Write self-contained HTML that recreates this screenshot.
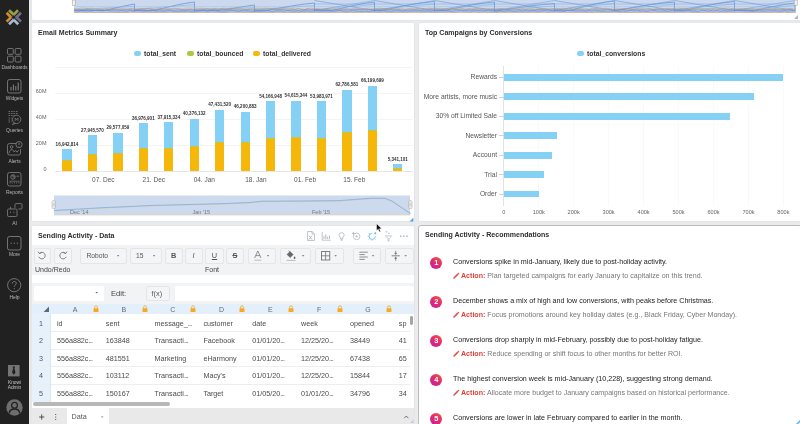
<!DOCTYPE html>
<html><head><meta charset="utf-8"><title>Dashboard</title>
<style>
*{box-sizing:border-box;margin:0;padding:0}
html,body{width:800px;height:424px;overflow:hidden;background:#e9ebec;font-family:"Liberation Sans",sans-serif;}
body{position:relative}
.abs{position:absolute}
.side{position:absolute;left:0;top:0;width:29px;height:424px;background:#212121}
.side .lb{position:absolute;left:0;width:29px;text-align:center;font-size:5px;color:#b4b4b4;line-height:6px;letter-spacing:-0.1px}
.side svg{position:absolute;overflow:visible}
.panel{position:absolute;background:#fff;border:1px solid #e3e6e8;border-radius:2px}
.title{position:absolute;font-weight:bold;font-size:7.05px;color:#2e2e2e;white-space:nowrap;line-height:10px}
.t{position:absolute;white-space:nowrap}
.leg{position:absolute;font-weight:bold;font-size:6.8px;color:#333;white-space:nowrap;line-height:9px}
.pill{position:absolute;width:7px;height:4.4px;border-radius:2.2px}
.ylab{position:absolute;font-size:5.5px;color:#666;white-space:nowrap;line-height:8px;text-align:right}
.xlab{position:absolute;font-size:6.5px;color:#555;white-space:nowrap;line-height:9px;text-align:center;width:40px}
.dl{position:absolute;font-size:4.55px;font-weight:bold;color:#333;white-space:nowrap;line-height:6px;text-align:center;width:40px}
.grid{position:absolute;height:1px;background:#f4f4f4}
.bar{position:absolute}
.cat{position:absolute;font-size:6.7px;color:#555;white-space:nowrap;line-height:9px;text-align:right;width:90px}
.xl2{position:absolute;font-size:5.6px;color:#666;white-space:nowrap;line-height:7px;text-align:center;width:30px}
.rec1{position:absolute;font-size:7.15px;color:#222;white-space:nowrap;line-height:10px}
.rec2{position:absolute;font-size:7.08px;color:#777;white-space:nowrap;line-height:10px}
.rec2 b{color:#e0403a}
.num{position:absolute;width:12px;height:12px;border-radius:50%;background:linear-gradient(215deg,#f4563a 5%,#e02a70 50%,#c81fa6 100%);color:#fff;font-weight:bold;font-size:7.4px;line-height:12px;text-align:center}
.tb{position:absolute;background:#f1f3f4}
.btn{position:absolute;background:#f4f5f6;border:1px solid #e3e5e7;border-radius:2px}
.btxt{position:absolute;font-size:7.4px;color:#555;white-space:nowrap;line-height:9px}
.cell{position:absolute;font-size:7.2px;color:#4a4a4a;white-space:nowrap;line-height:9px}
.hl{position:absolute;height:1px;background:#eeeeee}
.dd{letter-spacing:-0.7px}
</style></head><body><div id="root" style="position:absolute;left:0;top:0;width:800px;height:424px;will-change:transform">

<div class="side">
<svg style="left:0px;top:0px" width="29" height="30" viewBox="0 0 29 30" fill="none" stroke-width="2.7" stroke-linejoin="miter">
<path d="M9 10.2 L13.7 14.6 L18 10.2" stroke="#9aa03e"/>
<path d="M6.6 12.8 L11 17.2 L6.6 21.6" stroke="#d48a2e"/>
<path d="M21 12.8 L16.5 17.2 L21 21.6" stroke="#756a86"/>
<path d="M9 24.2 L13.7 19.8 L18.2 24.2" stroke="#a4bcd2"/>
<circle cx="13.7" cy="17.2" r="1.9" fill="#1d1d1d" stroke="#5f6a74" stroke-width="0.8"/>
</svg>
<svg style="left:7px;top:48px" width="15" height="15" viewBox="0 0 15 15" fill="none" stroke="#7d7d7d" stroke-width="0.9">
<rect x="0.5" y="0.5" width="5.8" height="5.8" rx="1"/><rect x="8.2" y="0.5" width="5.8" height="5.8" rx="1"/>
<rect x="0.5" y="8.2" width="5.8" height="5.8" rx="1"/><rect x="8.2" y="8.2" width="5.8" height="5.8" rx="1"/></svg>
<div class="lb" style="top:64.4px">Dashboards</div>
<svg style="left:7px;top:79px" width="15" height="15" viewBox="0 0 15 15" fill="none" stroke="#7d7d7d" stroke-width="0.9">
<rect x="0.5" y="0.5" width="13.5" height="13.5" rx="2"/>
<path d="M4 11.5V8 M6.4 11.5V5.5 M8.8 11.5V7 M11.2 11.5V3.5" stroke-width="1.1"/></svg>
<div class="lb" style="top:95.4px">Widgets</div>
<svg style="left:7px;top:110px" width="16" height="16" viewBox="0 0 16 16" fill="none" stroke="#7d7d7d" stroke-width="0.8">
<path d="M1.5 1.5h10 M1.5 3.5h10 M1.5 5.5h6" stroke-dasharray="1.6 0.9"/>
<path d="M1.5 8h3 M1.5 10h3 M1.5 12h3" stroke-dasharray="1.6 0.9"/>
<circle cx="9.6" cy="9.4" r="4.2"/><path d="M7 12.6 L5.6 14.6 L8.6 13.4"/>
<path d="M8.2 11V8l1.4 1.8L11 8v3" stroke-width="0.7"/></svg>
<div class="lb" style="top:126.9px">Queries</div>
<svg style="left:7px;top:141px" width="16" height="15" viewBox="0 0 16 15" fill="none" stroke="#7d7d7d" stroke-width="0.85">
<path d="M9 2.5H2.5a2 2 0 0 0-2 2V12a2 2 0 0 0 2 2h9a2 2 0 0 0 2-2V8"/>
<circle cx="12" cy="3.6" r="3.1"/><path d="M12 1.8v2.2 M12 5v0.5" stroke-width="0.9"/>
<circle cx="4.6" cy="6" r="1.3"/><path d="M2 12.2c0.5-3 1.8-3.6 2.8-3.6s1.6 0.8 2.4 2.4l1.4-1.6 1.4 1.8 1.6-2"/></svg>
<div class="lb" style="top:157.9px">Alerts</div>
<svg style="left:7px;top:172px" width="15" height="15" viewBox="0 0 15 15" fill="none" stroke="#7d7d7d" stroke-width="0.85">
<rect x="0.5" y="0.5" width="13.5" height="13.5" rx="2"/>
<circle cx="6" cy="5" r="2.2"/><path d="M6 2.8V5h2.2 M9.5 4.2h2.5"/>
<path d="M3 11.5V9.2h9v2.3 M5.2 11.5v-1.4 M7.4 11.5v-1.4 M9.6 11.5v-1.4" stroke-width="0.7"/></svg>
<div class="lb" style="top:188.9px">Reports</div>
<svg style="left:6px;top:203px" width="17" height="15" viewBox="0 0 17 15" fill="none" stroke="#7d7d7d" stroke-width="0.85">
<rect x="1.5" y="6" width="9.5" height="7.5" rx="1.2"/><path d="M4.5 6V3.8 M4.5 2.6v0.1"/>
<path d="M4 9.2h1 M7.4 9.2h1" stroke-width="1"/>
<path d="M9 4.8V1.6a1 1 0 0 1 1-1h5a1 1 0 0 1 1 1V5a1 1 0 0 1-1 1h-2.6"/></svg>
<div class="lb" style="top:220.4px">AI</div>
<svg style="left:7px;top:236px" width="15" height="15" viewBox="0 0 15 15" fill="none" stroke="#7d7d7d" stroke-width="0.9">
<rect x="0.5" y="0.5" width="13.5" height="13.5" rx="2"/>
<path d="M3.6 7.3h1.2 M6.7 7.3h1.2 M9.8 7.3h1.2" stroke-width="1.1"/></svg>
<div class="lb" style="top:251.4px">More</div>
<svg style="left:7px;top:278px" width="15" height="15" viewBox="0 0 15 15" fill="none" stroke="#7d7d7d" stroke-width="0.9">
<circle cx="7.2" cy="7.2" r="6.6"/>
<path d="M5.2 5.6c0-1.4 1-2.1 2.1-2.1s2 0.8 2 1.9c0 1.5-2 1.6-2 3.2 M7.3 10.2v1" stroke-width="1"/></svg>
<div class="lb" style="top:294.4px">Help</div>
<svg style="left:8px;top:364.8px" width="11.6" height="11.4" viewBox="0 0 11.6 11.4">
<rect x="0" y="0" width="11.6" height="11.4" fill="#747474"/>
<path d="M4.5 1.6h2.6l-0.7 1.7 1.1 4.3L5.8 9.8 4.1 7.6l1.1-4.3z" fill="#1e1e1e"/></svg>
<div class="lb" style="top:379.6px;line-height:5.2px;font-size:4.9px;color:#c4c4c4">Knowi<br>Admin</div>
<svg style="left:5.6px;top:398.6px" width="17" height="17" viewBox="0 0 17 17">
<circle cx="8.5" cy="8.5" r="8.2" fill="#6e6e6e"/>
<path d="M3.2 14.4c0.3-3.2 2.3-4.4 5.3-4.4s5 1.2 5.3 4.4" fill="#6e6e6e" stroke="#222" stroke-width="1.3"/>
<circle cx="8.5" cy="6.3" r="2.9" fill="#6e6e6e" stroke="#222" stroke-width="1.3"/>
</svg>
</div>
<div class="abs" style="left:29px;top:0;width:1.5px;height:424px;background:#e6e8ea"></div>
<div class="panel" style="left:30.5px;top:-2px;width:771px;height:22.5px;border-radius:0 0 2px 2px"></div>
<svg class="abs" style="left:0;top:0" width="800" height="22" viewBox="0 0 800 22">
<rect x="74" y="0" width="722" height="12.6" fill="#cbd8ed"/>
<path d="M74.5 10.5 H104.5 Q125.5 5.5 134.5 4 V11.5" fill="none" stroke="#4f8ad6" stroke-width="0.65"/>
<path d="M74.5 9.6 L134.5 6.5" fill="none" stroke="#78a8e2" stroke-width="0.45"/>
<path d="M74.5 6.5 H134.5" fill="none" stroke="#8fb5e6" stroke-width="0.4" opacity="0.7"/>
<path d="M134.5 10.5 H154.5 Q180.5 3.5 194.5 2 V11.5" fill="none" stroke="#4f8ad6" stroke-width="0.65"/>
<path d="M134.5 9.6 L194.5 4.5" fill="none" stroke="#78a8e2" stroke-width="0.45"/>
<path d="M134.5 6.5 H194.5" fill="none" stroke="#8fb5e6" stroke-width="0.4" opacity="0.7"/>
<path d="M194.5 10.5 H219.5 Q243.0 6.5 254.5 5 V11.5" fill="none" stroke="#4f8ad6" stroke-width="0.65"/>
<path d="M194.5 9.6 L254.5 7.5" fill="none" stroke="#78a8e2" stroke-width="0.45"/>
<path d="M194.5 6.5 H254.5" fill="none" stroke="#8fb5e6" stroke-width="0.4" opacity="0.7"/>
<path d="M254.5 10.5 H266.5 Q296.5 4.5 314.5 3 V11.5" fill="none" stroke="#4f8ad6" stroke-width="0.65"/>
<path d="M254.5 9.6 L314.5 5.5" fill="none" stroke="#78a8e2" stroke-width="0.45"/>
<path d="M254.5 6.5 H314.5" fill="none" stroke="#8fb5e6" stroke-width="0.4" opacity="0.7"/>
<path d="M314.5 10.5 H332.5 Q359.5 3.5 374.5 2 V11.5" fill="none" stroke="#4f8ad6" stroke-width="0.65"/>
<path d="M314.5 9.6 L374.5 4.5" fill="none" stroke="#78a8e2" stroke-width="0.45"/>
<path d="M314.5 6.5 H374.5" fill="none" stroke="#8fb5e6" stroke-width="0.4" opacity="0.7"/>
<path d="M314.5 0.5 L374.5 10.5" fill="none" stroke="#5d93da" stroke-width="0.55"/>
<path d="M314.5 10.5 L374.5 0.5" fill="none" stroke="#6a9de0" stroke-width="0.5"/>
<path d="M314.5 4 H374.5" fill="none" stroke="#6a9de0" stroke-width="0.4"/>
<path d="M374.5 10.5 H382.5 Q414.5 3.0 434.5 1.5 V11.5" fill="none" stroke="#4f8ad6" stroke-width="0.65"/>
<path d="M374.5 9.6 L434.5 4.0" fill="none" stroke="#78a8e2" stroke-width="0.45"/>
<path d="M374.5 6.5 H434.5" fill="none" stroke="#8fb5e6" stroke-width="0.4" opacity="0.7"/>
<path d="M374.5 0.5 L434.5 10.5" fill="none" stroke="#5d93da" stroke-width="0.55"/>
<path d="M374.5 10.5 L434.5 0.5" fill="none" stroke="#6a9de0" stroke-width="0.5"/>
<path d="M374.5 4 H434.5" fill="none" stroke="#6a9de0" stroke-width="0.4"/>
<path d="M434.5 10.5 H444.5 Q475.5 3.5 494.5 2 V11.5" fill="none" stroke="#4f8ad6" stroke-width="0.65"/>
<path d="M434.5 9.6 L494.5 4.5" fill="none" stroke="#78a8e2" stroke-width="0.45"/>
<path d="M434.5 6.5 H494.5" fill="none" stroke="#8fb5e6" stroke-width="0.4" opacity="0.7"/>
<path d="M434.5 0.5 L494.5 10.5" fill="none" stroke="#5d93da" stroke-width="0.55"/>
<path d="M434.5 10.5 L494.5 0.5" fill="none" stroke="#6a9de0" stroke-width="0.5"/>
<path d="M434.5 4 H494.5" fill="none" stroke="#6a9de0" stroke-width="0.4"/>
<path d="M494.5 10.5 H499.5 Q533.0 5.0 554.5 3.5 V11.5" fill="none" stroke="#4f8ad6" stroke-width="0.65"/>
<path d="M494.5 9.6 L554.5 6.0" fill="none" stroke="#78a8e2" stroke-width="0.45"/>
<path d="M494.5 6.5 H554.5" fill="none" stroke="#8fb5e6" stroke-width="0.4" opacity="0.7"/>
<path d="M494.5 0.5 L554.5 10.5" fill="none" stroke="#5d93da" stroke-width="0.55"/>
<path d="M494.5 10.5 L554.5 0.5" fill="none" stroke="#6a9de0" stroke-width="0.5"/>
<path d="M494.5 4 H554.5" fill="none" stroke="#6a9de0" stroke-width="0.4"/>
<path d="M554.5 10.5 H569.5 Q598.0 2.5 614.5 1 V11.5" fill="none" stroke="#4f8ad6" stroke-width="0.65"/>
<path d="M554.5 9.6 L614.5 3.5" fill="none" stroke="#78a8e2" stroke-width="0.45"/>
<path d="M554.5 6.5 H614.5" fill="none" stroke="#8fb5e6" stroke-width="0.4" opacity="0.7"/>
<path d="M554.5 0.5 L614.5 10.5" fill="none" stroke="#5d93da" stroke-width="0.55"/>
<path d="M554.5 10.5 L614.5 0.5" fill="none" stroke="#6a9de0" stroke-width="0.5"/>
<path d="M554.5 4 H614.5" fill="none" stroke="#6a9de0" stroke-width="0.4"/>
<path d="M614.5 10.5 H617.5 Q652.0 3.5 674.5 2 V11.5" fill="none" stroke="#4f8ad6" stroke-width="0.65"/>
<path d="M614.5 9.6 L674.5 4.5" fill="none" stroke="#78a8e2" stroke-width="0.45"/>
<path d="M614.5 6.5 H674.5" fill="none" stroke="#8fb5e6" stroke-width="0.4" opacity="0.7"/>
<path d="M614.5 0.5 L674.5 10.5" fill="none" stroke="#5d93da" stroke-width="0.55"/>
<path d="M614.5 10.5 L674.5 0.5" fill="none" stroke="#6a9de0" stroke-width="0.5"/>
<path d="M614.5 4 H674.5" fill="none" stroke="#6a9de0" stroke-width="0.4"/>
<path d="M674.5 10.5 H684.5 Q715.5 3.0 734.5 1.5 V11.5" fill="none" stroke="#4f8ad6" stroke-width="0.65"/>
<path d="M674.5 9.6 L734.5 4.0" fill="none" stroke="#78a8e2" stroke-width="0.45"/>
<path d="M674.5 6.5 H734.5" fill="none" stroke="#8fb5e6" stroke-width="0.4" opacity="0.7"/>
<path d="M674.5 0.5 L734.5 10.5" fill="none" stroke="#5d93da" stroke-width="0.55"/>
<path d="M674.5 10.5 L734.5 0.5" fill="none" stroke="#6a9de0" stroke-width="0.5"/>
<path d="M674.5 4 H734.5" fill="none" stroke="#6a9de0" stroke-width="0.4"/>
<path d="M734.5 10.5 H754.5 Q780.8 4.5 795 3 V11.5" fill="none" stroke="#4f8ad6" stroke-width="0.65"/>
<path d="M734.5 9.6 L795 5.5" fill="none" stroke="#78a8e2" stroke-width="0.45"/>
<path d="M734.5 6.5 H795" fill="none" stroke="#8fb5e6" stroke-width="0.4" opacity="0.7"/>
<path d="M734.5 0.5 L795 10.5" fill="none" stroke="#5d93da" stroke-width="0.55"/>
<path d="M734.5 10.5 L795 0.5" fill="none" stroke="#6a9de0" stroke-width="0.5"/>
<path d="M734.5 4 H795" fill="none" stroke="#6a9de0" stroke-width="0.4"/>
<path d="M74.0 8.35 L76.0 8.81 L77.7 8.65 L80.3 7.98 L83.3 7.95 L86.1 8.00 L87.9 8.49 L91.8 8.07 L94.0 8.78 L98.4 8.71 L101.0 9.27 L102.7 9.10 L105.1 8.10 L106.9 8.33 L110.9 8.15 L114.1 8.79 L116.7 8.67 L118.4 7.98 L120.5 8.85 L123.3 8.34 L126.6 8.53 L129.0 9.01 L132.6 8.24 L135.8 8.64 L139.9 8.92 L142.3 9.27 L144.1 8.49 L147.9 8.11 L150.9 7.95 L154.4 8.97 L157.6 9.13 L160.0 8.87 L163.3 8.71 L166.2 9.08 L170.5 8.56 L174.0 7.98 L177.6 8.81 L182.1 9.05 L184.4 8.44 L188.0 7.93 L190.8 8.14 L192.7 7.98 L196.5 8.08 L198.7 8.45 L202.8 8.01 L205.7 8.67 L209.8 9.05 L213.9 8.29 L216.7 8.40 L220.8 9.24 L222.8 8.15 L225.0 8.23 L227.9 8.72 L230.2 7.91 L233.0 8.42 L236.2 9.23 L239.8 8.62 L243.1 8.85 L244.8 9.16 L248.6 9.12 L252.5 8.45 L255.2 8.04 L258.6 7.99 L260.3 8.19 L262.3 8.38 L264.0 7.90 L265.9 8.04 L268.5 7.94 L272.6 8.76 L274.6 8.25 L277.1 8.41 L279.0 9.09 L283.5 8.55 L286.4 8.02 L288.2 8.38 L290.5 9.06 L292.5 7.93 L296.8 8.64 L298.8 8.66 L300.4 8.64 L304.8 9.11 L308.4 8.27 L311.0 8.13 L314.8 8.65 L318.6 8.36 L320.8 9.04 L325.3 9.09 L329.2 9.05 L332.9 8.22 L336.0 8.40 L337.5 7.94 L339.9 8.26 L343.5 9.24 L346.3 9.21 L350.8 9.24 L353.4 8.21 L355.5 8.18 L357.7 8.77 L361.9 9.08 L364.8 8.81 L368.7 8.02 L372.2 9.17 L376.0 8.95 L379.0 8.15 L382.8 8.37 L386.7 9.26 L389.4 8.46 L393.8 8.91 L395.8 8.08 L397.7 9.17 L401.6 8.10 L405.6 9.27 L409.1 8.39 L412.2 8.08 L413.8 9.26 L417.2 8.64 L421.5 8.51 L425.6 9.06 L427.8 8.25 L430.2 8.24 L433.4 8.26 L436.2 8.08 L440.4 8.40 L443.3 8.72 L447.5 8.49 L451.7 8.60 L454.8 8.63 L456.4 8.52 L458.4 7.91 L462.3 8.14 L465.3 8.92 L468.4 8.36 L471.5 8.68 L475.3 8.05 L478.5 8.25 L480.8 8.98 L483.9 8.69 L487.7 9.18 L490.5 8.76 L493.5 8.62 L497.1 8.53 L500.2 8.57 L504.5 8.88 L508.6 9.22 L510.9 8.68 L515.2 9.08 L517.1 8.07 L520.0 8.00 L522.2 8.00 L525.7 9.00 L529.9 8.12 L533.5 8.82 L535.5 9.14 L539.9 8.21 L544.2 8.46 L547.2 9.29 L551.2 8.13 L554.0 8.62 L556.5 8.17 L559.0 8.91 L560.5 8.68 L563.3 7.93 L565.8 8.77 L568.9 7.99 L573.3 9.00 L577.7 8.05 L580.0 7.96 L583.9 8.28 L585.8 8.49 L590.0 9.05 L592.3 8.11 L596.5 8.70 L600.1 8.03 L601.8 8.86 L604.6 8.00 L608.9 8.79 L612.8 8.02 L616.9 7.99 L621.0 8.54 L623.5 8.67 L627.8 8.28 L629.6 8.64 L631.9 8.05 L633.8 7.97 L635.9 8.34 L638.4 8.96 L640.7 8.60 L642.8 8.39 L644.3 8.25 L645.9 8.93 L649.0 8.17 L651.9 9.21 L653.8 9.05 L656.6 8.59 L660.6 8.45 L663.6 8.86 L668.0 8.38 L672.0 8.89 L675.4 8.47 L678.0 7.98 L679.9 8.00 L683.6 8.26 L685.6 8.02 L689.6 9.12 L693.1 8.29 L695.3 8.31 L698.2 8.12 L701.1 8.27 L705.4 9.26 L708.6 8.24 L713.0 8.33 L715.6 7.90 L718.2 8.56 L721.2 8.18 L724.2 7.91 L726.5 8.03 L729.2 7.96 L730.8 8.33 L733.0 8.72 L736.1 8.95 L739.5 8.90 L743.7 8.45 L746.2 9.28 L748.1 8.91 L751.5 7.96 L755.5 9.15 L758.9 8.93 L762.9 8.10 L765.9 8.61 L769.9 9.03 L773.9 8.72 L778.1 8.86 L781.7 8.22 L783.3 8.09 L785.8 8.05 L789.9 8.68 L793.2 8.78" fill="none" stroke="#d9a05c" stroke-width="0.5" opacity="0.8"/>
<path d="M74.0 9.04 L75.5 9.47 L79.3 9.05 L82.4 9.27 L84.1 9.38 L86.3 8.45 L88.6 9.37 L90.7 9.39 L95.2 9.04 L97.8 9.02 L101.4 9.42 L104.7 9.25 L106.4 8.56 L108.7 9.39 L111.1 9.14 L112.6 8.43 L115.0 9.29 L118.5 9.30 L120.9 9.07 L123.8 9.00 L125.7 9.60 L127.8 9.72 L132.1 8.37 L134.9 9.50 L139.3 8.98 L141.6 8.64 L146.0 8.64 L149.2 8.55 L152.3 9.68 L154.2 9.50 L157.2 9.59 L160.8 8.67 L165.0 9.03 L166.6 8.36 L169.6 8.98 L172.0 8.55 L174.5 8.79 L178.5 8.35 L182.3 9.52 L184.1 9.65 L187.8 9.61 L190.2 8.87 L192.8 9.75 L196.1 8.85 L198.9 8.74 L200.5 8.49 L204.5 8.75 L208.8 8.70 L211.1 9.07 L213.2 8.87 L217.6 9.59 L221.5 9.23 L225.8 9.67 L228.9 9.36 L230.6 9.38 L233.4 9.40 L236.8 8.75 L238.5 9.65 L240.4 9.01 L242.9 8.77 L246.6 9.72 L248.9 9.27 L251.3 9.13 L254.0 8.58 L256.0 8.64 L260.2 9.05 L262.3 9.62 L266.8 8.98 L268.8 8.62 L270.5 8.83 L272.3 8.68 L274.6 9.15 L278.7 9.40 L281.5 8.93 L284.5 8.88 L287.1 8.44 L289.4 9.70 L291.3 9.05 L294.7 9.56 L296.8 8.73 L299.1 8.91 L301.9 9.69 L305.9 9.57 L307.5 8.40 L311.1 9.60 L314.0 9.17 L315.5 8.90 L319.8 9.51 L323.9 9.71 L326.1 8.50 L328.1 9.08 L331.7 9.67 L335.3 9.26 L339.1 8.99 L342.3 8.41 L346.1 8.68 L350.4 9.25 L352.8 8.53 L355.0 9.24 L358.6 8.51 L360.3 9.08 L363.6 8.89 L365.8 9.19 L367.3 8.77 L370.2 9.69 L373.6 9.59 L376.5 8.68 L378.8 9.69 L382.4 8.78 L384.0 9.05 L387.5 8.94 L389.8 9.28 L394.0 8.67 L395.6 8.82 L398.4 9.31 L400.5 9.47 L404.2 9.06 L406.3 9.71 L408.8 9.50 L410.9 8.66 L414.7 8.76 L419.1 9.04 L421.1 8.66 L423.9 9.28 L428.2 8.55 L430.9 8.65 L435.3 8.55 L437.0 8.43 L439.7 9.61 L443.8 9.38 L448.3 9.65 L450.8 8.61 L455.1 9.39 L456.7 9.28 L459.4 8.87 L461.8 8.59 L463.4 8.74 L465.9 9.69 L467.8 9.70 L469.9 8.85 L473.9 9.50 L476.7 8.42 L479.6 8.87 L483.8 8.62 L486.4 9.61 L488.0 8.93 L492.0 9.42 L493.6 8.40 L495.3 9.64 L497.5 9.40 L501.7 8.82 L504.1 9.69 L507.4 8.72 L511.1 8.79 L513.4 8.36 L517.2 9.63 L520.6 9.67 L522.1 8.68 L525.1 9.69 L529.4 8.89 L531.7 8.95 L534.6 9.65 L536.7 9.47 L540.4 9.50 L544.2 9.20 L546.7 8.80 L549.3 9.45 L551.0 8.63 L554.8 8.70 L556.5 8.40 L559.6 8.81 L564.1 9.59 L568.6 8.72 L570.3 8.48 L573.3 9.34 L576.1 8.68 L578.9 9.22 L582.4 9.40 L586.5 9.28 L588.3 9.53 L590.7 9.14 L593.3 9.38 L595.4 8.70 L597.7 8.56 L601.8 9.16 L604.3 8.90 L608.8 9.06 L611.0 9.48 L614.4 9.74 L616.2 9.01 L620.2 9.53 L624.4 8.41 L626.8 8.52 L628.9 9.71 L632.1 9.65 L634.7 9.56 L637.6 8.71 L641.4 9.67 L643.2 9.18 L646.6 8.65 L649.2 8.55 L651.3 8.71 L654.6 9.26 L656.7 8.37 L659.2 9.30 L661.3 8.79 L663.4 9.46 L666.5 8.44 L668.3 8.90 L671.5 9.24 L673.2 8.58 L676.8 8.92 L679.2 8.78 L683.5 8.79 L686.7 8.85 L689.5 9.56 L694.0 8.86 L696.1 9.37 L698.2 8.36 L702.4 8.94 L706.3 8.92 L710.5 9.00 L712.5 8.37 L715.6 9.25 L719.9 8.47 L723.2 8.87 L726.2 8.55 L728.6 9.08 L732.9 8.50 L735.8 9.48 L740.2 8.63 L742.1 9.67 L746.5 9.03 L748.2 9.65 L750.9 9.62 L754.2 9.50 L756.2 9.45 L758.4 8.92 L762.4 9.51 L764.5 8.66 L767.2 9.08 L769.8 8.52 L772.1 9.36 L776.3 8.41 L779.4 9.41 L781.1 9.52 L782.9 9.19 L786.1 9.23 L788.5 8.94 L791.7 8.95 L795.2 8.98" fill="none" stroke="#c98a9a" stroke-width="0.5" opacity="0.8"/>
<path d="M74.0 8.83 L77.4 9.49 L79.6 9.87 L83.4 9.44 L85.4 9.46 L87.3 8.98 L90.1 8.93 L92.9 9.51 L94.5 9.69 L96.2 9.83 L100.1 9.52 L101.7 9.51 L104.4 10.13 L106.3 10.00 L110.8 9.82 L114.7 9.07 L119.2 9.49 L123.5 10.08 L125.5 9.90 L129.8 8.89 L132.4 9.86 L134.4 10.06 L136.7 9.94 L138.6 9.50 L142.9 9.09 L145.2 9.51 L147.6 8.85 L149.7 9.03 L154.0 9.75 L158.2 9.04 L162.0 8.96 L165.1 9.69 L167.7 10.02 L170.8 9.61 L175.0 8.95 L179.5 9.68 L182.2 9.92 L184.4 10.19 L187.7 9.30 L191.5 9.42 L193.5 9.84 L195.2 9.95 L197.4 9.69 L201.9 9.62 L205.4 9.24 L206.9 8.85 L208.8 9.66 L211.6 9.52 L215.8 8.98 L218.0 9.71 L219.5 8.80 L222.1 8.95 L224.7 9.11 L227.9 9.62 L230.0 9.67 L233.0 8.99 L237.3 9.14 L239.2 8.93 L242.6 10.02 L246.5 9.36 L248.8 8.82 L252.2 9.59 L254.8 9.70 L257.6 10.11 L261.3 9.15 L265.5 8.86 L268.6 9.37 L270.8 8.88 L274.6 8.82 L277.8 10.12 L279.7 9.08 L283.1 9.51 L286.5 9.94 L288.5 9.23 L290.9 8.87 L295.1 9.90 L298.7 8.81 L302.7 9.84 L305.6 9.84 L308.5 9.12 L310.3 9.13 L311.9 9.27 L315.7 9.77 L319.7 9.80 L322.0 9.58 L324.8 9.90 L327.9 9.17 L331.3 10.15 L333.5 10.03 L335.0 9.16 L337.2 9.84 L341.6 9.84 L344.0 10.03 L346.5 9.13 L350.7 9.68 L354.3 9.73 L358.8 9.46 L362.8 9.78 L366.9 9.41 L370.5 9.60 L373.0 9.10 L376.3 8.91 L380.6 9.00 L382.1 8.95 L386.4 9.28 L388.3 8.84 L390.0 9.77 L393.4 9.78 L397.1 8.89 L400.4 9.31 L404.3 9.95 L408.5 8.89 L412.6 10.08 L416.9 8.95 L419.0 8.96 L420.6 9.99 L424.6 9.69 L428.6 9.68 L430.9 8.94 L432.7 9.86 L434.8 9.25 L437.6 8.83 L439.9 9.20 L443.5 9.32 L446.0 10.15 L449.0 9.99 L452.3 8.84 L455.1 9.41 L458.9 9.29 L462.5 9.55 L464.7 10.01 L466.4 9.95 L468.4 8.80 L470.5 9.87 L475.0 8.81 L478.0 9.49 L481.8 9.06 L484.8 9.29 L488.8 9.16 L493.2 9.20 L495.3 9.78 L498.3 8.95 L501.7 8.91 L505.6 9.78 L509.4 9.68 L512.0 9.36 L514.7 10.05 L516.4 10.04 L518.0 9.09 L520.3 10.06 L523.3 9.33 L527.5 9.13 L530.3 9.54 L534.1 9.85 L537.5 9.29 L540.0 9.02 L544.1 9.73 L547.8 9.04 L550.6 9.88 L553.8 8.98 L556.7 10.04 L558.9 9.07 L561.3 9.78 L565.4 9.02 L567.3 9.15 L569.8 9.53 L571.8 9.26 L573.9 10.17 L577.6 8.94 L581.9 8.94 L584.6 10.18 L588.5 9.83 L591.3 9.07 L594.7 8.95 L596.8 9.34 L598.4 9.36 L602.3 9.77 L605.3 9.69 L608.2 9.00 L611.5 9.37 L615.2 10.07 L618.0 9.60 L621.8 9.39 L623.9 9.81 L628.1 9.88 L631.7 9.99 L635.2 9.70 L638.1 9.24 L641.5 8.94 L644.2 9.90 L647.9 9.68 L650.1 9.39 L653.0 9.67 L655.7 9.75 L660.0 9.06 L663.5 9.89 L666.1 9.49 L670.6 8.85 L673.7 9.03 L677.5 10.12 L680.6 8.94 L683.8 9.56 L687.5 9.52 L690.9 9.96 L693.9 9.37 L698.3 9.09 L701.8 9.35 L705.6 8.97 L710.1 9.30 L711.8 9.18 L714.5 8.82 L717.2 9.39 L720.8 9.29 L723.1 9.11 L726.8 10.12 L729.9 9.11 L733.8 9.35 L735.9 8.98 L739.8 9.93 L743.2 9.46 L746.4 9.12 L750.8 9.29 L754.2 9.95 L758.1 9.46 L760.5 9.57 L762.4 9.97 L764.9 9.99 L767.2 9.33 L769.5 9.40 L771.6 8.80 L775.2 9.19 L777.5 9.22 L780.4 9.40 L783.8 9.72 L786.4 10.10 L790.5 8.88 L794.4 10.07" fill="none" stroke="#5fb27a" stroke-width="0.5" opacity="0.8"/>
<path d="M74.0 9.45 L78.0 10.14 L79.5 9.27 L83.9 10.17 L86.1 9.39 L88.1 9.58 L91.9 9.74 L93.9 10.52 L97.7 9.49 L101.9 10.10 L105.8 10.19 L109.9 10.35 L113.9 9.53 L117.5 9.99 L121.3 9.86 L125.4 10.03 L127.7 9.58 L129.6 9.94 L131.3 9.90 L133.2 9.94 L136.2 10.01 L140.3 9.26 L144.3 9.91 L147.5 10.18 L151.5 9.77 L154.3 10.59 L156.0 10.14 L159.4 9.29 L162.8 10.21 L167.1 9.71 L171.5 9.96 L174.5 10.51 L176.1 10.26 L179.4 9.72 L183.5 9.76 L186.4 9.99 L190.2 9.55 L193.1 9.84 L196.2 10.41 L198.6 10.41 L201.3 9.96 L203.6 9.96 L208.0 10.17 L211.9 9.71 L214.4 9.67 L217.6 10.14 L221.5 9.31 L225.2 10.49 L228.3 9.32 L230.7 9.26 L232.8 10.54 L236.1 10.17 L240.0 10.52 L243.3 10.11 L246.7 10.22 L250.0 10.20 L252.1 10.18 L255.0 10.32 L256.8 9.50 L258.4 10.33 L262.6 10.17 L265.2 10.40 L269.1 10.04 L271.4 9.67 L274.1 9.70 L276.9 10.15 L281.2 9.33 L284.4 9.31 L286.3 10.38 L289.5 10.54 L292.4 9.27 L295.0 10.08 L299.3 10.62 L302.3 9.83 L304.1 10.15 L306.2 9.46 L307.7 9.26 L311.3 9.42 L315.7 9.37 L319.8 9.43 L321.4 10.26 L323.6 10.28 L325.6 9.32 L329.5 10.25 L333.5 10.27 L335.3 10.13 L338.9 9.89 L343.2 9.61 L347.6 10.25 L349.1 9.27 L352.6 10.39 L354.3 9.69 L358.0 9.48 L362.1 9.93 L363.8 9.76 L367.0 9.86 L370.5 9.45 L374.4 9.76 L377.9 10.13 L380.6 9.79 L384.5 10.57 L388.3 10.04 L390.7 9.33 L395.1 10.23 L399.1 9.71 L402.4 10.62 L406.4 10.09 L408.8 9.85 L413.0 9.78 L416.6 10.09 L420.8 10.38 L423.1 9.25 L425.4 9.84 L428.7 10.39 L432.8 9.31 L436.8 10.39 L440.9 10.05 L443.2 10.44 L447.2 10.21 L451.4 9.74 L453.2 10.03 L457.0 9.53 L460.8 10.55 L463.0 10.10 L466.5 9.90 L468.7 9.61 L472.4 10.36 L475.3 9.37 L479.2 10.33 L481.4 10.06 L485.6 10.49 L488.7 9.92 L491.9 9.51 L494.0 9.50 L497.6 9.76 L500.8 9.81 L503.9 9.46 L505.5 10.65 L508.1 9.40 L511.5 10.35 L513.5 10.09 L516.0 9.98 L517.6 9.30 L522.0 10.46 L525.0 10.04 L527.3 10.34 L530.1 10.58 L533.9 10.40 L538.3 9.61 L539.9 9.53 L541.9 9.37 L543.6 10.03 L547.7 9.89 L552.0 10.52 L553.7 10.09 L556.4 9.42 L560.8 9.61 L564.0 10.15 L568.3 10.19 L571.0 9.88 L573.0 10.60 L577.5 9.56 L579.1 9.61 L581.6 10.51 L585.9 10.42 L587.5 10.35 L591.1 10.16 L595.6 9.33 L597.5 10.31 L601.8 10.20 L604.2 10.08 L608.0 9.40 L610.5 9.61 L612.4 9.92 L614.4 9.58 L616.3 10.20 L617.8 10.25 L619.9 9.30 L624.2 9.56 L628.5 10.46 L632.7 9.45 L635.5 9.39 L639.8 10.43 L643.2 9.88 L645.7 10.40 L648.6 10.13 L650.6 9.56 L652.2 10.25 L655.4 9.45 L659.5 9.62 L662.2 9.47 L664.5 10.43 L667.1 9.48 L670.0 9.70 L674.2 9.41 L678.7 9.33 L682.9 10.19 L685.0 9.92 L687.3 9.61 L689.5 9.76 L693.9 10.65 L698.2 9.39 L700.6 10.50 L702.2 10.27 L704.6 10.62 L706.2 10.38 L708.7 9.45 L710.2 10.42 L713.3 9.51 L716.1 10.53 L718.2 10.05 L720.2 9.50 L724.0 10.25 L726.1 9.36 L727.8 10.10 L730.8 9.63 L732.9 10.11 L736.5 10.39 L739.8 9.53 L741.5 10.28 L744.2 10.26 L745.9 10.38 L748.4 10.43 L752.5 9.94 L754.0 10.52 L757.0 10.47 L759.3 9.51 L763.3 9.76 L765.2 9.77 L768.5 9.26 L771.6 9.87 L774.6 9.42 L778.3 10.39 L782.4 9.70 L786.0 9.78 L789.8 9.34 L793.9 10.59" fill="none" stroke="#9a78d2" stroke-width="0.5" opacity="0.8"/>
<path d="M74.0 10.42 L77.1 10.45 L78.7 11.05 L80.8 9.96 L82.6 10.05 L86.6 9.74 L88.4 10.68 L90.5 9.72 L93.8 10.51 L96.8 10.68 L98.6 10.92 L102.3 9.76 L104.2 10.39 L107.2 10.09 L109.0 10.27 L110.9 10.53 L115.0 9.91 L118.2 10.75 L120.2 10.86 L124.5 10.24 L127.3 10.88 L130.4 10.25 L134.7 10.79 L137.2 10.04 L139.7 10.31 L144.2 10.83 L148.4 10.84 L152.4 9.77 L155.5 11.04 L159.8 10.05 L162.6 10.59 L165.2 10.44 L166.9 10.31 L169.9 9.73 L171.8 11.06 L175.6 11.01 L179.0 10.83 L183.2 10.94 L184.8 10.60 L187.1 10.65 L189.4 10.46 L193.7 10.57 L195.9 10.43 L198.7 11.03 L201.1 10.13 L204.5 9.87 L207.8 11.04 L210.9 10.08 L213.8 10.45 L215.7 9.87 L217.6 10.11 L220.3 10.10 L222.6 9.82 L225.7 10.88 L229.0 10.50 L232.5 9.98 L236.1 10.35 L239.2 10.56 L242.2 10.13 L244.4 10.01 L247.4 10.24 L250.7 9.72 L253.2 10.91 L255.4 10.48 L258.4 10.10 L262.9 10.11 L266.7 9.92 L268.4 10.92 L271.2 9.79 L273.9 10.32 L277.6 9.85 L279.8 11.04 L283.5 9.92 L286.0 10.19 L289.5 10.56 L293.6 10.85 L296.6 10.73 L300.4 10.76 L303.3 10.80 L306.9 10.98 L308.8 10.92 L310.3 10.77 L313.6 10.40 L317.9 10.50 L320.7 10.80 L324.8 10.55 L327.5 10.33 L330.3 10.71 L332.7 10.25 L335.9 10.24 L338.3 10.80 L342.4 10.40 L345.2 9.96 L347.6 9.90 L350.9 10.51 L352.6 10.99 L355.1 10.88 L359.1 11.04 L361.2 10.30 L365.5 9.71 L367.1 10.49 L370.1 10.99 L373.9 10.45 L378.4 10.42 L381.5 10.66 L384.1 10.20 L387.4 10.19 L391.8 10.65 L394.8 9.84 L397.5 10.26 L400.6 10.50 L404.8 11.05 L407.7 10.32 L411.1 11.09 L413.6 10.44 L417.6 9.94 L420.0 11.07 L424.0 10.42 L425.8 10.95 L429.4 10.85 L433.9 10.94 L436.7 9.92 L439.0 10.42 L442.0 9.96 L444.1 10.58 L447.4 10.19 L451.9 10.59 L453.5 10.28 L457.4 10.13 L460.9 9.71 L463.4 10.88 L466.6 10.64 L468.7 10.40 L471.9 10.07 L475.3 10.44 L479.8 10.50 L482.5 9.87 L484.5 10.76 L486.3 9.84 L488.3 10.43 L492.3 10.56 L496.2 9.79 L497.8 10.78 L500.2 10.70 L502.8 9.94 L505.1 9.84 L509.3 10.52 L511.8 10.33 L514.5 9.78 L518.7 10.52 L523.0 10.32 L526.4 10.05 L528.0 11.00 L532.1 10.14 L536.3 10.84 L538.7 10.54 L543.1 10.39 L547.4 10.04 L550.1 10.71 L552.3 10.13 L556.4 10.38 L560.3 10.04 L562.3 10.20 L564.4 11.06 L566.7 10.49 L568.6 10.45 L571.2 10.26 L572.9 9.87 L576.9 10.19 L579.1 9.97 L581.5 10.03 L583.1 10.63 L585.6 9.92 L589.2 9.83 L591.5 10.87 L593.4 10.32 L597.4 10.83 L599.4 10.19 L603.1 10.23 L607.5 9.99 L611.8 10.41 L614.0 10.33 L615.9 10.69 L618.2 10.96 L621.4 10.22 L623.7 10.55 L625.8 10.92 L627.7 10.42 L630.8 10.08 L634.6 10.24 L638.1 10.49 L640.5 10.25 L642.3 9.95 L646.3 10.15 L649.8 9.85 L653.0 10.21 L656.0 10.12 L657.7 10.14 L659.9 9.88 L663.5 10.10 L666.2 10.97 L670.1 10.94 L674.2 9.89 L676.5 9.74 L680.0 10.63 L682.6 10.28 L686.1 10.68 L688.3 10.89 L690.9 10.58 L692.9 9.86 L697.1 10.73 L700.8 9.76 L702.4 9.93 L704.5 10.12 L707.1 9.75 L709.6 10.59 L711.6 10.88 L714.8 10.70 L717.1 10.31 L720.6 10.19 L722.1 10.87 L726.0 10.10 L727.6 10.90 L730.9 9.77 L733.2 9.86 L737.0 9.99 L741.3 10.75 L743.0 10.67 L745.7 10.75 L749.7 10.09 L751.5 11.02 L754.2 11.00 L757.8 10.73 L761.8 10.58 L764.7 9.78 L768.3 10.30 L771.3 11.00 L773.2 10.77 L774.8 10.68 L778.7 10.07 L781.9 11.06 L785.3 10.46 L787.5 9.78 L790.1 10.28 L792.2 10.13 L794.1 10.69" fill="none" stroke="#58b6c8" stroke-width="0.5" opacity="0.8"/>
<path d="M74.0 10.48 L76.2 10.87 L79.1 11.46 L81.6 10.57 L85.8 10.35 L89.0 10.62 L92.9 10.92 L96.7 10.39 L100.2 10.99 L103.1 11.22 L107.1 10.31 L109.4 10.65 L111.6 10.23 L113.9 10.43 L117.5 10.78 L119.3 10.60 L122.2 10.66 L124.2 10.25 L125.8 11.54 L129.5 10.27 L133.2 11.52 L136.4 10.30 L139.3 10.76 L141.4 10.91 L142.9 11.44 L146.4 11.03 L150.7 11.06 L152.9 10.49 L154.8 10.19 L158.7 11.33 L161.1 10.41 L164.5 11.33 L168.8 10.39 L172.6 11.31 L176.3 10.61 L178.4 11.31 L180.8 10.67 L184.0 10.67 L188.0 10.49 L189.6 10.94 L193.0 11.30 L196.6 11.42 L201.0 10.84 L204.0 10.37 L206.3 10.96 L208.1 11.11 L210.1 10.77 L214.5 10.28 L216.1 10.77 L218.2 11.16 L219.7 11.33 L223.8 11.25 L226.5 10.55 L230.0 10.87 L232.8 10.62 L235.6 11.08 L239.6 11.42 L241.6 10.56 L244.4 10.94 L246.9 10.42 L248.7 10.60 L251.6 11.51 L255.8 11.36 L260.2 11.50 L263.6 11.29 L265.3 11.10 L268.6 10.57 L271.8 11.48 L274.8 11.06 L277.2 10.63 L281.3 10.19 L283.4 11.10 L286.2 10.27 L289.7 10.67 L292.9 10.73 L296.0 10.94 L298.7 10.31 L300.8 11.40 L303.9 10.31 L308.0 10.50 L309.8 10.89 L312.0 10.83 L315.2 10.47 L318.4 10.31 L321.4 10.97 L323.2 10.72 L324.9 10.77 L329.0 10.92 L332.6 11.21 L334.5 11.54 L338.2 10.29 L342.1 10.70 L344.2 11.49 L347.3 11.23 L349.3 11.24 L350.9 10.48 L353.5 10.17 L356.8 10.45 L359.2 11.14 L362.0 11.39 L365.4 11.37 L368.6 11.43 L372.7 10.39 L376.4 10.63 L380.2 11.10 L384.2 10.32 L386.8 11.18 L391.1 11.16 L392.8 11.00 L394.6 10.92 L398.5 10.31 L402.8 11.10 L405.0 10.42 L407.9 11.32 L411.1 10.31 L412.7 10.30 L416.6 10.41 L419.7 10.56 L423.3 10.68 L425.2 11.38 L428.3 11.12 L432.3 11.48 L433.8 10.63 L435.8 10.85 L439.9 11.27 L441.5 10.41 L445.4 11.10 L448.1 10.82 L450.1 11.33 L452.8 11.37 L456.1 10.26 L458.6 10.45 L462.8 10.97 L464.4 10.39 L467.0 10.80 L470.2 10.69 L472.8 10.16 L476.0 10.62 L477.6 10.79 L482.0 10.21 L484.0 11.09 L486.3 10.53 L489.3 10.52 L492.5 10.89 L496.9 11.54 L498.5 10.93 L502.3 11.37 L506.1 11.04 L509.5 10.66 L511.9 11.26 L516.0 11.46 L519.5 10.58 L523.3 11.19 L526.3 11.04 L528.9 10.92 L531.6 10.23 L534.1 10.60 L538.6 10.82 L541.2 10.49 L543.4 10.64 L545.3 10.16 L549.4 10.78 L552.2 10.95 L554.7 10.39 L556.4 10.57 L558.8 11.17 L561.9 11.46 L564.5 11.44 L567.7 10.26 L569.7 10.96 L574.2 10.65 L578.0 10.75 L582.1 10.24 L585.1 11.41 L587.4 10.51 L589.0 10.38 L591.3 11.14 L593.4 10.71 L595.5 10.99 L599.6 11.06 L601.7 11.18 L606.1 10.99 L607.8 11.28 L612.0 10.63 L613.9 10.41 L617.0 11.38 L620.4 11.44 L622.6 10.61 L626.3 11.06 L629.0 11.10 L631.5 10.23 L634.3 10.21 L637.7 10.62 L640.6 10.99 L642.9 10.80 L644.4 11.45 L647.6 11.53 L649.3 11.01 L653.0 10.61 L654.8 10.37 L656.7 11.22 L658.5 11.29 L661.2 10.90 L664.5 10.93 L668.0 10.99 L670.5 11.19 L672.7 11.15 L676.5 11.24 L678.9 11.23 L683.4 10.78 L685.7 10.88 L690.0 10.33 L691.6 10.82 L695.0 11.23 L697.6 11.54 L699.8 11.21 L701.6 10.19 L703.5 10.23 L706.5 10.93 L708.5 11.47 L711.1 10.36 L713.2 11.18 L717.4 10.38 L719.0 11.24 L721.2 11.53 L724.2 11.04 L726.8 11.27 L729.6 10.60 L733.9 10.30 L737.6 10.24 L741.0 10.71 L745.1 10.23 L748.3 10.72 L752.5 11.47 L755.9 10.46 L758.2 10.52 L761.0 10.47 L763.1 11.21 L766.5 10.57 L771.0 10.45 L774.2 10.37 L778.3 11.37 L780.6 11.20 L784.6 10.55 L787.1 10.83 L791.2 10.38 L794.8 10.99" fill="none" stroke="#4f8ad6" stroke-width="0.5" opacity="0.8"/>
<path d="M74.0 11.41 L78.1 10.89 L82.3 11.10 L86.1 11.81 L88.2 11.81 L92.7 11.02 L94.2 10.76 L98.7 10.61 L102.9 10.81 L106.6 10.74 L108.6 11.56 L110.4 11.08 L114.6 11.60 L118.8 11.97 L120.4 10.93 L124.3 11.57 L125.9 11.31 L128.1 11.20 L129.9 10.63 L134.4 11.04 L138.5 10.77 L141.5 10.79 L144.2 10.85 L147.8 10.81 L151.5 11.30 L153.3 11.10 L156.3 11.89 L158.9 10.90 L163.3 11.84 L167.0 10.98 L169.0 10.97 L170.7 10.66 L173.7 11.17 L176.9 11.11 L178.4 11.56 L181.9 11.36 L185.1 11.57 L189.5 11.82 L193.2 11.16 L195.6 11.19 L200.0 11.14 L202.7 11.17 L204.6 12.00 L206.1 11.45 L210.4 10.96 L213.7 11.13 L216.0 10.88 L217.8 11.78 L221.7 11.87 L223.3 11.57 L225.8 11.50 L228.9 11.04 L233.3 10.60 L237.1 11.79 L240.1 11.43 L244.6 10.93 L248.0 11.64 L250.6 11.60 L253.3 11.34 L256.6 11.55 L259.1 11.48 L262.2 10.91 L265.6 10.97 L269.8 11.26 L273.5 11.33 L276.4 10.91 L278.3 11.90 L281.4 11.33 L284.5 11.74 L286.7 10.84 L290.7 11.24 L294.1 11.76 L298.3 11.81 L299.9 11.13 L303.9 11.74 L305.8 10.82 L308.0 10.74 L310.6 11.72 L313.7 11.23 L315.4 11.15 L319.9 11.57 L322.8 11.27 L326.7 11.66 L328.6 11.55 L331.2 11.33 L333.4 11.12 L335.9 11.13 L337.5 10.88 L340.7 10.68 L342.7 11.61 L345.1 11.05 L347.3 11.77 L349.1 11.49 L353.1 10.88 L355.9 11.71 L359.3 11.12 L360.9 11.22 L363.5 11.60 L365.9 11.17 L369.3 11.74 L371.9 11.14 L375.1 11.89 L377.2 11.96 L380.8 11.12 L384.3 11.06 L386.0 11.66 L388.7 11.34 L391.7 11.86 L395.4 10.64 L398.7 11.25 L401.6 11.78 L404.4 11.26 L408.5 11.22 L411.5 11.32 L415.5 11.54 L419.2 11.16 L420.8 11.55 L424.0 11.68 L427.8 10.77 L429.9 10.71 L433.9 10.74 L435.7 11.65 L438.9 10.68 L442.4 11.60 L445.3 10.68 L448.9 11.19 L452.2 12.00 L456.1 11.82 L458.1 11.07 L461.1 10.61 L465.6 10.98 L467.9 11.04 L470.1 11.80 L473.3 11.32 L476.1 10.67 L478.5 11.81 L482.4 11.80 L484.7 10.88 L486.3 11.35 L488.9 11.25 L491.9 11.42 L494.5 11.72 L496.6 11.89 L499.8 10.67 L502.2 11.35 L504.9 11.39 L507.4 10.98 L511.3 11.01 L514.9 11.72 L518.2 11.24 L522.5 11.22 L526.6 10.68 L529.4 11.49 L531.1 11.81 L532.8 11.43 L534.8 11.89 L538.0 11.72 L541.0 11.54 L544.5 11.01 L546.7 11.77 L548.6 11.89 L550.7 10.74 L552.5 11.70 L556.9 11.18 L560.4 10.96 L564.6 11.56 L566.5 10.68 L570.1 10.66 L574.1 11.01 L576.3 11.41 L578.8 11.38 L580.7 11.88 L583.2 11.78 L585.2 11.72 L589.6 11.15 L591.2 11.13 L594.6 10.91 L597.8 10.73 L600.7 11.62 L603.5 11.55 L605.3 11.76 L607.2 11.89 L611.7 11.92 L614.7 11.01 L617.3 11.65 L620.3 11.90 L622.0 11.28 L626.1 11.44 L629.3 10.72 L631.2 10.98 L635.4 11.78 L637.5 11.89 L639.1 11.44 L643.5 11.08 L647.9 11.52 L649.5 11.07 L652.4 10.95 L656.1 10.85 L660.0 11.02 L661.7 11.38 L663.5 11.37 L667.3 11.43 L670.2 10.65 L673.2 10.74 L676.7 10.78 L679.9 11.09 L682.5 11.53 L684.5 10.84 L688.9 11.06 L692.9 11.82 L695.8 10.81 L697.6 11.83 L699.5 11.29 L702.6 10.76 L705.5 10.83 L708.6 11.31 L711.2 10.88 L713.9 10.88 L715.8 10.94 L719.9 11.30 L724.1 10.62 L728.4 11.28 L732.3 11.40 L735.8 10.92 L739.6 10.82 L741.9 10.64 L744.6 11.33 L746.9 11.85 L748.7 11.41 L750.9 11.43 L754.7 11.60 L756.4 10.94 L759.7 11.98 L761.3 11.47 L764.9 11.74 L767.4 11.73 L770.3 11.89 L771.9 11.92 L774.6 11.17 L776.4 10.94 L780.1 11.55 L782.0 11.08 L783.9 10.88 L786.1 11.06 L790.5 12.00 L794.4 11.27" fill="none" stroke="#7f7fe0" stroke-width="0.5" opacity="0.8"/>
<path d="M74.0 12.14 L78.2 12.10 L81.6 11.33 L85.0 12.23 L88.9 11.18 L92.5 11.54 L94.5 12.40 L98.0 12.09 L99.9 12.21 L104.2 12.32 L108.0 12.22 L111.9 11.88 L114.7 12.21 L118.5 12.27 L120.9 12.40 L124.0 12.37 L125.9 12.41 L129.7 11.40 L133.8 11.37 L135.9 11.69 L138.1 11.74 L142.3 12.01 L145.9 11.60 L149.8 12.16 L153.3 12.37 L157.3 11.62 L159.1 11.96 L163.1 11.53 L166.4 12.22 L170.2 11.06 L173.2 11.07 L175.0 12.19 L177.8 11.90 L180.7 11.52 L182.8 11.55 L186.8 11.92 L189.2 11.17 L191.5 12.03 L194.3 11.98 L198.3 11.22 L201.8 11.11 L205.8 11.31 L208.1 12.39 L210.7 11.36 L214.9 11.90 L219.0 11.60 L222.0 12.39 L225.1 12.43 L227.1 12.21 L229.1 11.79 L230.6 11.30 L234.9 11.69 L238.9 11.40 L241.4 11.19 L244.6 12.26 L247.6 11.58 L251.9 12.30 L255.4 11.16 L258.8 11.67 L263.2 11.56 L266.6 11.93 L269.3 11.78 L272.8 12.32 L275.8 11.56 L280.2 11.13 L284.2 12.01 L287.4 11.68 L291.2 12.30 L294.8 12.10 L296.5 11.51 L298.4 12.38 L302.5 11.25 L305.8 11.86 L307.4 11.60 L311.2 11.95 L313.5 12.12 L315.9 11.81 L318.7 12.42 L322.1 12.18 L325.6 11.58 L330.0 12.04 L333.6 11.44 L335.6 11.86 L339.6 12.16 L342.1 11.25 L345.1 12.28 L347.1 12.08 L349.1 11.49 L350.8 11.47 L353.5 12.40 L357.8 11.31 L360.3 12.37 L362.4 11.50 L365.2 11.20 L367.5 11.60 L370.1 12.40 L372.4 11.34 L376.6 11.68 L380.7 11.94 L384.5 11.49 L386.4 12.11 L389.4 11.83 L392.9 12.10 L395.2 11.56 L399.4 11.79 L401.8 11.93 L404.1 12.13 L405.7 12.21 L408.9 11.55 L413.2 11.42 L415.5 11.15 L418.6 12.11 L422.1 11.63 L426.1 11.21 L428.5 11.95 L432.9 11.94 L436.5 12.13 L439.2 12.37 L442.9 11.53 L445.6 12.18 L448.1 11.31 L452.2 11.79 L455.3 11.99 L459.5 11.24 L462.0 11.14 L464.7 11.75 L468.8 11.98 L472.0 11.62 L475.3 11.43 L479.3 12.15 L483.3 11.26 L486.8 12.11 L489.8 12.31 L494.0 12.09 L498.0 11.96 L502.1 11.23 L505.7 12.04 L509.1 11.44 L510.8 11.89 L514.7 11.43 L516.9 11.36 L518.7 12.00 L523.1 12.17 L525.7 12.03 L527.4 12.22 L529.9 11.05 L533.2 11.24 L535.6 11.13 L538.4 11.83 L542.3 11.11 L546.3 11.20 L548.5 11.93 L551.0 11.51 L554.2 11.36 L558.1 11.34 L562.1 12.18 L565.2 11.09 L569.1 11.09 L572.1 11.64 L573.8 11.93 L577.4 11.87 L580.1 11.77 L583.4 11.37 L587.5 12.44 L591.4 12.40 L593.9 12.43 L595.6 11.72 L597.5 11.69 L601.1 12.04 L603.9 11.53 L606.0 11.61 L608.3 11.32 L612.1 11.77 L614.9 11.33 L618.5 11.33 L620.8 11.83 L624.4 12.41 L628.1 12.38 L632.4 12.06 L636.0 11.14 L638.2 11.07 L642.2 12.06 L645.6 11.42 L648.2 11.28 L651.6 12.44 L654.0 11.11 L656.0 11.55 L660.2 12.18 L663.1 11.19 L664.9 11.27 L668.8 11.71 L673.2 12.33 L677.1 11.72 L681.1 11.23 L682.9 11.84 L685.9 11.34 L688.2 11.08 L692.4 12.04 L696.8 12.42 L699.6 12.08 L702.2 12.19 L706.2 11.24 L707.8 11.35 L711.0 11.58 L712.6 12.21 L716.4 11.70 L718.0 12.29 L721.2 11.15 L723.6 11.92 L727.8 11.73 L731.2 11.34 L733.4 12.32 L736.1 11.20 L739.3 11.23 L741.4 11.69 L744.7 11.94 L748.3 11.67 L750.0 12.06 L751.7 11.71 L754.4 11.99 L758.0 11.39 L761.5 12.02 L764.4 11.25 L768.6 11.89 L770.3 11.38 L774.8 11.37 L777.4 12.15 L781.4 11.94 L785.1 11.10 L786.9 12.42 L790.8 11.10 L792.5 11.39" fill="none" stroke="#8a9ad8" stroke-width="0.5" opacity="0.8"/>
<path d="M74 12.5 H796" stroke="#d2a070" stroke-width="0.6"/>
<rect x="72.2" y="0" width="3" height="5.5" fill="#f2f2f2" stroke="#999" stroke-width="0.5"/>
<rect x="794.2" y="0" width="3" height="5.5" fill="#f2f2f2" stroke="#999" stroke-width="0.5"/>
<path d="M798 15 L798 19 L794 19 Z" fill="#a8b8c8"/>
</svg>
<div class="panel" style="left:30.5px;top:22.3px;width:384.5px;height:199.6px"></div>
<div class="title" style="left:38px;top:27.5px">Email Metrics Summary</div>
<div class="pill" style="left:134px;top:51.2px;background:#85d0f5"></div><div class="leg" style="left:144px;top:49px">total_sent</div>
<div class="pill" style="left:187px;top:51.2px;background:#a9c93e"></div><div class="leg" style="left:197px;top:49px">total_bounced</div>
<div class="pill" style="left:253px;top:51.2px;background:#f5b70a"></div><div class="leg" style="left:263px;top:49px">total_delivered</div>
<div class="grid" style="left:55px;top:170.7px;width:358px;background:#e2e6ee;"></div>
<div class="ylab" style="left:26.5px;width:20px;top:164.8px">0</div>
<div class="grid" style="left:55px;top:144.8px;width:358px;"></div>
<div class="ylab" style="left:26.5px;width:20px;top:138.9px">20M</div>
<div class="grid" style="left:55px;top:119.0px;width:358px;"></div>
<div class="ylab" style="left:26.5px;width:20px;top:113.1px">40M</div>
<div class="grid" style="left:55px;top:93.1px;width:358px;"></div>
<div class="ylab" style="left:26.5px;width:20px;top:87.2px">60M</div>
<div class="grid" style="left:55px;top:67.3px;width:358px;"></div>
<div class="bar" style="left:62.3px;top:149.3px;width:9.4px;height:11.5px;background:#85d0f5"></div>
<div class="bar" style="left:62.3px;top:160.8px;width:9.4px;height:10.4px;background:#f5b70a"></div>
<div class="bar" style="left:62.3px;top:160.4px;width:9.4px;height:0.7px;background:#c6c63a"></div>
<div class="dl" style="left:47.0px;top:141.7px">16,942,814</div>
<div class="bar" style="left:87.8px;top:135.1px;width:9.4px;height:19.0px;background:#85d0f5"></div>
<div class="bar" style="left:87.8px;top:154.0px;width:9.4px;height:17.2px;background:#f5b70a"></div>
<div class="bar" style="left:87.8px;top:153.6px;width:9.4px;height:0.7px;background:#c6c63a"></div>
<div class="dl" style="left:72.5px;top:127.5px">27,945,570</div>
<div class="bar" style="left:113.2px;top:133.0px;width:9.4px;height:20.1px;background:#85d0f5"></div>
<div class="bar" style="left:113.2px;top:153.0px;width:9.4px;height:18.2px;background:#f5b70a"></div>
<div class="bar" style="left:113.2px;top:152.6px;width:9.4px;height:0.7px;background:#c6c63a"></div>
<div class="dl" style="left:97.9px;top:125.4px">29,577,059</div>
<div class="bar" style="left:138.7px;top:123.4px;width:9.4px;height:25.1px;background:#85d0f5"></div>
<div class="bar" style="left:138.7px;top:148.5px;width:9.4px;height:22.7px;background:#f5b70a"></div>
<div class="bar" style="left:138.7px;top:148.1px;width:9.4px;height:0.7px;background:#c6c63a"></div>
<div class="dl" style="left:123.3px;top:115.8px">36,976,901</div>
<div class="bar" style="left:164.1px;top:122.2px;width:9.4px;height:25.7px;background:#85d0f5"></div>
<div class="bar" style="left:164.1px;top:147.9px;width:9.4px;height:23.3px;background:#f5b70a"></div>
<div class="bar" style="left:164.1px;top:147.5px;width:9.4px;height:0.7px;background:#c6c63a"></div>
<div class="dl" style="left:148.8px;top:114.6px">37,915,334</div>
<div class="bar" style="left:189.6px;top:119.0px;width:9.4px;height:27.4px;background:#85d0f5"></div>
<div class="bar" style="left:189.6px;top:146.4px;width:9.4px;height:24.8px;background:#f5b70a"></div>
<div class="bar" style="left:189.6px;top:146.0px;width:9.4px;height:0.7px;background:#c6c63a"></div>
<div class="dl" style="left:174.2px;top:111.4px">40,376,132</div>
<div class="bar" style="left:215.0px;top:109.9px;width:9.4px;height:32.2px;background:#85d0f5"></div>
<div class="bar" style="left:215.0px;top:142.1px;width:9.4px;height:29.1px;background:#f5b70a"></div>
<div class="bar" style="left:215.0px;top:141.7px;width:9.4px;height:0.7px;background:#c6c63a"></div>
<div class="dl" style="left:199.7px;top:102.3px">47,431,520</div>
<div class="bar" style="left:240.5px;top:111.5px;width:9.4px;height:31.4px;background:#85d0f5"></div>
<div class="bar" style="left:240.5px;top:142.8px;width:9.4px;height:28.4px;background:#f5b70a"></div>
<div class="bar" style="left:240.5px;top:142.4px;width:9.4px;height:0.7px;background:#c6c63a"></div>
<div class="dl" style="left:225.2px;top:103.9px">46,200,883</div>
<div class="bar" style="left:265.9px;top:101.2px;width:9.4px;height:36.8px;background:#85d0f5"></div>
<div class="bar" style="left:265.9px;top:137.9px;width:9.4px;height:33.3px;background:#f5b70a"></div>
<div class="bar" style="left:265.9px;top:137.5px;width:9.4px;height:0.7px;background:#c6c63a"></div>
<div class="dl" style="left:250.6px;top:93.6px">54,166,948</div>
<div class="bar" style="left:291.3px;top:100.6px;width:9.4px;height:37.1px;background:#85d0f5"></div>
<div class="bar" style="left:291.3px;top:137.7px;width:9.4px;height:33.5px;background:#f5b70a"></div>
<div class="bar" style="left:291.3px;top:137.3px;width:9.4px;height:0.7px;background:#c6c63a"></div>
<div class="dl" style="left:276.0px;top:93.0px">54,615,344</div>
<div class="bar" style="left:316.8px;top:101.4px;width:9.4px;height:36.6px;background:#85d0f5"></div>
<div class="bar" style="left:316.8px;top:138.0px;width:9.4px;height:33.2px;background:#f5b70a"></div>
<div class="bar" style="left:316.8px;top:137.6px;width:9.4px;height:0.7px;background:#c6c63a"></div>
<div class="dl" style="left:301.5px;top:93.8px">53,983,971</div>
<div class="bar" style="left:342.2px;top:90.0px;width:9.4px;height:42.6px;background:#85d0f5"></div>
<div class="bar" style="left:342.2px;top:132.6px;width:9.4px;height:38.6px;background:#f5b70a"></div>
<div class="bar" style="left:342.2px;top:132.2px;width:9.4px;height:0.7px;background:#c6c63a"></div>
<div class="dl" style="left:326.9px;top:82.4px">62,786,581</div>
<div class="bar" style="left:367.7px;top:85.6px;width:9.4px;height:44.9px;background:#85d0f5"></div>
<div class="bar" style="left:367.7px;top:130.5px;width:9.4px;height:40.7px;background:#f5b70a"></div>
<div class="bar" style="left:367.7px;top:130.1px;width:9.4px;height:0.7px;background:#c6c63a"></div>
<div class="dl" style="left:352.4px;top:78.0px">66,199,699</div>
<div class="bar" style="left:393.1px;top:164.3px;width:9.4px;height:3.6px;background:#85d0f5"></div>
<div class="bar" style="left:393.1px;top:167.9px;width:9.4px;height:3.3px;background:#f5b70a"></div>
<div class="bar" style="left:393.1px;top:167.5px;width:9.4px;height:0.7px;background:#c6c63a"></div>
<div class="dl" style="left:377.8px;top:156.7px">5,341,101</div>
<div class="xlab" style="left:83.3px;top:174.9px">07. Dec</div>
<div class="xlab" style="left:133.8px;top:174.9px">21. Dec</div>
<div class="xlab" style="left:184.3px;top:174.9px">04. Jan</div>
<div class="xlab" style="left:235.9px;top:174.9px">18. Jan</div>
<div class="xlab" style="left:285.1px;top:174.9px">01. Feb</div>
<div class="xlab" style="left:334.3px;top:174.9px">15. Feb</div>
<svg class="abs" style="left:30px;top:190px" width="390" height="34" viewBox="30 190 390 34">
<rect x="54" y="195.5" width="356" height="19.4" fill="#cdd9ec"/>
<path d="M54 210.9 L100 208.2 L150 205.9 L200 204.6 L220 204.1 L250 202.9 L262 201.6 L300 201.4 L340 201 L360 199.4 L372 198.6 L385 198.7 L392 201.4 L410.5 213.9" fill="none" stroke="#dcc28c" stroke-width="0.6"/>
<path d="M54 210.5 L100 207.8 L150 205.5 L200 204.2 L220 203.7 L250 202.5 L262 201.2 L300 201 L340 200.6 L360 199 L372 198.2 L385 198.3 L392 201 L410.5 213.5" fill="none" stroke="#86b4e6" stroke-width="0.9" stroke-linejoin="round"/>
<path d="M54 215 H410.5" stroke="#d8caa6" stroke-width="0.6"/>
<rect x="52.1" y="200.8" width="3.2" height="7.6" rx="0.8" fill="#f4f4f4" stroke="#999" stroke-width="0.5"/>
<path d="M53.2 202.8v3.6 M54.2 202.8v3.6" stroke="#999" stroke-width="0.35"/>
<rect x="408.8" y="200.8" width="3.2" height="7.6" rx="0.8" fill="#f4f4f4" stroke="#999" stroke-width="0.5"/>
<path d="M409.9 202.8v3.6 M410.9 202.8v3.6" stroke="#999" stroke-width="0.35"/>
<path d="M413.4 217.4 L413.4 221.4 L409.6 221.4 Z" fill="#4aa8e8"/>
</svg>
<div class="t" style="left:70px;top:208.6px;font-size:5.5px;color:#707a8a;line-height:7px">Dec '14</div>
<div class="t" style="left:192.5px;top:208.6px;font-size:5.5px;color:#707a8a;line-height:7px">Jan '15</div>
<div class="t" style="left:312px;top:208.6px;font-size:5.5px;color:#707a8a;line-height:7px">Feb '15</div>
<div class="panel" style="left:418px;top:22.3px;width:384px;height:199.6px"></div>
<div class="title" style="left:425px;top:27.5px">Top Campaigns by Conversions</div>
<div class="pill" style="left:576.5px;top:51.2px;background:#85d0f5"></div><div class="leg" style="left:587px;top:49px">total_conversions</div>
<div class="abs" style="left:503.3px;top:66px;width:1px;height:140px;background:#dfe3ea"></div>
<div class="abs" style="left:538.2px;top:66px;width:1px;height:140px;background:#f8f9fa"></div>
<div class="abs" style="left:573.2px;top:66px;width:1px;height:140px;background:#f8f9fa"></div>
<div class="abs" style="left:608.1px;top:66px;width:1px;height:140px;background:#f8f9fa"></div>
<div class="abs" style="left:643.1px;top:66px;width:1px;height:140px;background:#f8f9fa"></div>
<div class="abs" style="left:678.0px;top:66px;width:1px;height:140px;background:#f8f9fa"></div>
<div class="abs" style="left:713.0px;top:66px;width:1px;height:140px;background:#f8f9fa"></div>
<div class="abs" style="left:748.0px;top:66px;width:1px;height:140px;background:#f8f9fa"></div>
<div class="abs" style="left:782.9px;top:66px;width:1px;height:140px;background:#f8f9fa"></div>
<div class="bar" style="left:503.8px;top:73.9px;width:278.8px;height:6.8px;background:#85d0f5"></div>
<div class="cat" style="left:407px;top:72.4px">Rewards</div>
<div class="abs" style="left:499px;top:77.0px;width:4.5px;height:0.6px;background:#ccd3e0"></div>
<div class="bar" style="left:503.8px;top:93.4px;width:250.3px;height:6.8px;background:#85d0f5"></div>
<div class="cat" style="left:407px;top:91.9px">More artists, more music</div>
<div class="abs" style="left:499px;top:96.5px;width:4.5px;height:0.6px;background:#ccd3e0"></div>
<div class="bar" style="left:503.8px;top:112.8px;width:226.2px;height:6.8px;background:#85d0f5"></div>
<div class="cat" style="left:407px;top:111.3px">30% off Limited Sale</div>
<div class="abs" style="left:499px;top:115.9px;width:4.5px;height:0.6px;background:#ccd3e0"></div>
<div class="bar" style="left:503.8px;top:132.3px;width:53.1px;height:6.8px;background:#85d0f5"></div>
<div class="cat" style="left:407px;top:130.8px">Newsletter</div>
<div class="abs" style="left:499px;top:135.4px;width:4.5px;height:0.6px;background:#ccd3e0"></div>
<div class="bar" style="left:503.8px;top:151.8px;width:48.4px;height:6.8px;background:#85d0f5"></div>
<div class="cat" style="left:407px;top:150.3px">Account</div>
<div class="abs" style="left:499px;top:154.9px;width:4.5px;height:0.6px;background:#ccd3e0"></div>
<div class="bar" style="left:503.8px;top:171.2px;width:40.3px;height:6.8px;background:#85d0f5"></div>
<div class="cat" style="left:407px;top:169.7px">Trial</div>
<div class="abs" style="left:499px;top:174.3px;width:4.5px;height:0.6px;background:#ccd3e0"></div>
<div class="bar" style="left:503.8px;top:190.7px;width:34.8px;height:6.8px;background:#85d0f5"></div>
<div class="cat" style="left:407px;top:189.2px">Order</div>
<div class="abs" style="left:499px;top:193.8px;width:4.5px;height:0.6px;background:#ccd3e0"></div>
<div class="xl2" style="left:488.8px;top:208.7px">0</div>
<div class="xl2" style="left:523.8px;top:208.7px">100k</div>
<div class="xl2" style="left:558.7px;top:208.7px">200k</div>
<div class="xl2" style="left:593.6px;top:208.7px">300k</div>
<div class="xl2" style="left:628.6px;top:208.7px">400k</div>
<div class="xl2" style="left:663.5px;top:208.7px">500k</div>
<div class="xl2" style="left:698.5px;top:208.7px">600k</div>
<div class="xl2" style="left:733.5px;top:208.7px">700k</div>
<div class="xl2" style="left:768.4px;top:208.7px">800k</div>
<div class="panel" style="left:30.5px;top:224.8px;width:384.5px;height:201px"></div>
<div class="title" style="left:38px;top:230.5px">Sending Activity - Data</div>
<svg class="abs" style="left:300px;top:228px" width="112" height="16" viewBox="300 228 112 16" fill="none" stroke="#a9aeb3" stroke-width="0.7">
<!-- excel -->
<path d="M307.5 231.5h4.6l2.4 2.4v6.6h-7z M312 231.6v2.4h2.4"/><path d="M309 235.6l3 4 M312 235.6l-3 4" stroke-width="0.8"/>
<!-- chart -->
<path d="M322.2 231.8v8.4h8.6"/><path d="M324 239v-3 M325.8 239v-4.6 M327.6 239v-2.4 M329.4 239v-3.6" stroke-width="0.8"/>
<!-- bulb -->
<path d="M341.6 232.6a2.5 2.5 0 0 1 1.4 4.6v1.1h-2.8v-1.1a2.5 2.5 0 0 1 1.4-4.6z M340.5 239.5h2.2 M340.9 240.5h1.4"/>
<!-- brain/ai -->
<circle cx="356.6" cy="236.4" r="3.3"/><path d="M355.2 236.4h2.8 M356.6 235v2.8" stroke-width="0.6"/><path d="M353.2 231.6l0.5 1.2 1.2 0.4-1.2 0.5-0.5 1.2-0.4-1.2-1.2-0.5 1.2-0.4z" fill="#a9aeb3" stroke="none"/>
<!-- active gear -->
<g stroke="#55b0f4" stroke-width="0.75"><path d="M372.2 233.2a3.1 3.1 0 1 0 3.1 3.1"/><path d="M369.7 233.8l-0.8-0.8 M369.7 238.8l-0.8 0.8 M374.7 238.8l0.8 0.8 M368.7 236.3h-0.9 M372.2 239.8v0.9" stroke-width="0.7"/><path d="M375.2 231.6l0.5 1.1 1.1 0.5-1.1 0.5-0.5 1.1-0.5-1.1-1.1-0.5 1.1-0.5z" fill="#55b0f4" stroke="none"/></g>
<!-- sparkle filter -->
<path d="M384.8 235.8h7.4 M385.8 236.2l2.2 2.6v2.4h1v-2.4l2.2-2.6" stroke-width="0.6"/>
<path d="M386.6 231v1.6 M385.8 231.8h1.6 M389 232.6v1.4 M388.3 233.3h1.4" stroke-width="0.5"/>
</svg>
<div class="t" style="left:399.5px;top:229px;font-size:9px;color:#a9aeb3;line-height:10px;letter-spacing:0.6px;font-weight:bold">...</div>
<div class="tb" style="left:31.5px;top:245.3px;width:382.5px;height:30px"></div>
<div class="btn" style="left:33.8px;top:248px;width:17.4px;height:15.5px"></div>
<div class="btn" style="left:53.8px;top:248px;width:18.2px;height:15.5px"></div>
<div class="btn" style="left:80px;top:248px;width:47.0px;height:15.5px"></div>
<div class="btn" style="left:130px;top:248px;width:32.0px;height:15.5px"></div>
<div class="btn" style="left:165px;top:248px;width:17.5px;height:15.5px"></div>
<div class="btn" style="left:185px;top:248px;width:17.5px;height:15.5px"></div>
<div class="btn" style="left:205px;top:248px;width:18.7px;height:15.5px"></div>
<div class="btn" style="left:226px;top:248px;width:17.7px;height:15.5px"></div>
<div class="btn" style="left:247.5px;top:248px;width:28.5px;height:15.5px"></div>
<div class="btn" style="left:280px;top:248px;width:31.0px;height:15.5px"></div>
<div class="btn" style="left:314.5px;top:248px;width:29.2px;height:15.5px"></div>
<div class="btn" style="left:352.5px;top:248px;width:28.5px;height:15.5px"></div>
<div class="btn" style="left:384.5px;top:248px;width:29.2px;height:15.5px"></div>
<div class="btxt" style="left:35px;top:265.3px;color:#444;font-size:7px">Undo/Redo</div>
<div class="btxt" style="left:205px;top:265.3px;color:#444;font-size:7px">Font</div>
<div class="btxt" style="left:86.5px;top:251.3px;font-size:6.7px;color:#555">Roboto</div>
<div class="btxt" style="left:136px;top:251.3px;font-size:6.7px;color:#555">15</div>
<div class="btxt" style="left:171px;top:251.1px;font-weight:bold;color:#555;font-size:7.4px">B</div>
<div class="btxt" style="left:192.6px;top:251.1px;font-style:italic;color:#555;font-size:7.4px">I</div>
<div class="btxt" style="left:211.8px;top:251.1px;text-decoration:underline;color:#555;font-size:7.4px">U</div>
<div class="btxt" style="left:232.4px;top:251.1px;text-decoration:line-through;color:#555;font-size:7.4px;font-weight:bold">S</div>
<svg class="abs" style="left:30px;top:246px" width="386" height="20" viewBox="30 246 386 20" fill="none" stroke="#666" stroke-width="0.8">
<!-- undo -->
<path d="M39.4 253.4a3.3 3.3 0 1 1-0.6 3.4" /><path d="M38 251.6l1.3 1.9 2.2-0.7"/>
<!-- redo -->
<path d="M65.6 253.4a3.3 3.3 0 1 0 0.6 3.4"/><path d="M67 251.6l-1.3 1.9-2.2-0.7"/>
<!-- carets -->
<g fill="#666" stroke="none">
<path d="M116.8 255.2h2.6l-1.3 1.4z"/><path d="M152.8 255.2h2.6l-1.3 1.4z"/>
<path d="M266.8 255.2h2.6l-1.3 1.4z"/><path d="M301.8 255.2h2.6l-1.3 1.4z"/>
<path d="M334.3 255.2h2.6l-1.3 1.4z"/><path d="M371.8 255.2h2.6l-1.3 1.4z"/><path d="M404.3 255.2h2.6l-1.3 1.4z"/>
</g>
<!-- A text color -->
<path d="M254.6 258l3.2-7 3.2 7 M255.8 255.6h4" stroke-width="0.7"/><path d="M254.4 260.2h7" stroke="#bbb" stroke-width="1"/>
<!-- fill bucket -->
<path d="M290 251.4l3.2 3.2-3 3-3.2-3.2z" fill="#666" stroke-width="0.5"/><path d="M288.6 250.6l1.8 1.8" stroke-width="0.7"/><path d="M294.6 256.2c0.6 0.9 0.9 1.3 0.9 1.8a0.9 0.9 0 0 1-1.8 0c0-0.5 0.3-0.9 0.9-1.8z" fill="#666" stroke="none"/><path d="M286.6 260.4h8.8" stroke="#bbb" stroke-width="1"/>
<!-- borders -->
<rect x="321.4" y="251.6" width="8.4" height="8.4" stroke-width="0.8"/><path d="M325.6 251.6v8.4 M321.4 255.8h8.4" stroke-width="0.7"/>
<!-- align -->
<path d="M359.4 252.2h8.4 M359.4 254.6h5.4 M359.4 257h8.4 M359.4 259.4h5.4" stroke-width="0.7"/>
<!-- valign -->
<path d="M391.6 255.8h8.2" stroke-width="0.8"/><path d="M395.7 250.8v3.4 M395.7 257.4v3.4" stroke-width="0.7"/><path d="M394.5 253.2l1.2 1.3 1.2-1.3z M394.5 258.4l1.2-1.3 1.2 1.3z" fill="#666" stroke-width="0.3"/>
</svg>
<div class="tb" style="left:31.5px;top:282.8px;width:382.5px;height:21.4px"></div>
<div class="abs" style="left:33.8px;top:286px;width:70.7px;height:15px;background:#fff;border-radius:1.5px"></div>
<div class="abs" style="left:175px;top:286px;width:238.7px;height:15px;background:#fff;border-radius:1.5px"></div>
<div class="btn" style="left:145.5px;top:286px;width:24.5px;height:15px"></div>
<div class="btxt" style="left:111px;top:289px;color:#444;font-size:7.6px">Edit:</div>
<div class="btxt" style="left:151.6px;top:289px;color:#555;font-size:7.3px">f(x)</div>
<svg class="abs" style="left:94px;top:291px" width="6" height="4" viewBox="0 0 6 4"><path d="M1.4 1h2.6l-1.3 1.4z" fill="#666"/></svg>
<div class="abs" style="left:31.5px;top:304.2px;width:382.5px;height:10px;background:#e3f0fb"></div>
<div class="abs" style="left:31.5px;top:314.2px;width:19.2px;height:87.6px;background:#e6f1fb"></div>
<svg class="abs" style="left:43px;top:306px" width="7" height="7" viewBox="0 0 7 7"><path d="M6 0.6V6H0.6z" fill="#5a6b80"/></svg>
<div class="cell" style="left:65.0px;width:20px;text-align:center;top:304.9px;color:#667;font-size:7px">A</div>
<svg class="abs" style="left:92.6px;top:305.4px" width="6" height="7.4" viewBox="0 0 6 7.4"><path d="M1.6 3.4V2.2a1.4 1.4 0 0 1 2.8 0v1.2" fill="none" stroke="#f5a623" stroke-width="0.8"/><rect x="0.5" y="3.2" width="5" height="3.8" rx="0.6" fill="#f7a91f"/></svg>
<div class="cell" style="left:113.9px;width:20px;text-align:center;top:304.9px;color:#667;font-size:7px">B</div>
<svg class="abs" style="left:141.5px;top:305.4px" width="6" height="7.4" viewBox="0 0 6 7.4"><path d="M1.6 3.4V2.2a1.4 1.4 0 0 1 2.8 0v1.2" fill="none" stroke="#f5a623" stroke-width="0.8"/><rect x="0.5" y="3.2" width="5" height="3.8" rx="0.6" fill="#f7a91f"/></svg>
<div class="cell" style="left:162.7px;width:20px;text-align:center;top:304.9px;color:#667;font-size:7px">C</div>
<svg class="abs" style="left:190.3px;top:305.4px" width="6" height="7.4" viewBox="0 0 6 7.4"><path d="M1.6 3.4V2.2a1.4 1.4 0 0 1 2.8 0v1.2" fill="none" stroke="#f5a623" stroke-width="0.8"/><rect x="0.5" y="3.2" width="5" height="3.8" rx="0.6" fill="#f7a91f"/></svg>
<div class="cell" style="left:211.6px;width:20px;text-align:center;top:304.9px;color:#667;font-size:7px">D</div>
<svg class="abs" style="left:239.2px;top:305.4px" width="6" height="7.4" viewBox="0 0 6 7.4"><path d="M1.6 3.4V2.2a1.4 1.4 0 0 1 2.8 0v1.2" fill="none" stroke="#f5a623" stroke-width="0.8"/><rect x="0.5" y="3.2" width="5" height="3.8" rx="0.6" fill="#f7a91f"/></svg>
<div class="cell" style="left:260.4px;width:20px;text-align:center;top:304.9px;color:#667;font-size:7px">E</div>
<svg class="abs" style="left:288.0px;top:305.4px" width="6" height="7.4" viewBox="0 0 6 7.4"><path d="M1.6 3.4V2.2a1.4 1.4 0 0 1 2.8 0v1.2" fill="none" stroke="#f5a623" stroke-width="0.8"/><rect x="0.5" y="3.2" width="5" height="3.8" rx="0.6" fill="#f7a91f"/></svg>
<div class="cell" style="left:309.2px;width:20px;text-align:center;top:304.9px;color:#667;font-size:7px">F</div>
<svg class="abs" style="left:336.8px;top:305.4px" width="6" height="7.4" viewBox="0 0 6 7.4"><path d="M1.6 3.4V2.2a1.4 1.4 0 0 1 2.8 0v1.2" fill="none" stroke="#f5a623" stroke-width="0.8"/><rect x="0.5" y="3.2" width="5" height="3.8" rx="0.6" fill="#f7a91f"/></svg>
<div class="cell" style="left:358.1px;width:20px;text-align:center;top:304.9px;color:#667;font-size:7px">G</div>
<svg class="abs" style="left:385.7px;top:305.4px" width="6" height="7.4" viewBox="0 0 6 7.4"><path d="M1.6 3.4V2.2a1.4 1.4 0 0 1 2.8 0v1.2" fill="none" stroke="#f5a623" stroke-width="0.8"/><rect x="0.5" y="3.2" width="5" height="3.8" rx="0.6" fill="#f7a91f"/></svg>
<div class="cell" style="left:31.5px;width:19.2px;text-align:center;top:318.8px;color:#556">1</div>
<div class="cell" style="left:56.9px;top:318.8px">id</div>
<div class="cell" style="left:105.8px;top:318.8px">sent</div>
<div class="cell" style="left:154.6px;top:318.8px">message_<span class="dd">...</span></div>
<div class="cell" style="left:203.4px;top:318.8px">customer</div>
<div class="cell" style="left:252.3px;top:318.8px">date</div>
<div class="cell" style="left:301.1px;top:318.8px">week</div>
<div class="cell" style="left:350.0px;top:318.8px">opened</div>
<div class="cell" style="left:398.8px;top:318.8px">sp</div>
<div class="hl" style="left:31.5px;top:331.2px;width:378px"></div>
<div class="cell" style="left:31.5px;width:19.2px;text-align:center;top:336.3px;color:#556">2</div>
<div class="cell" style="left:56.9px;top:336.3px">556a882c<span class="dd">...</span></div>
<div class="cell" style="left:105.8px;top:336.3px">163848</div>
<div class="cell" style="left:154.6px;top:336.3px">Transacti<span class="dd">...</span></div>
<div class="cell" style="left:203.4px;top:336.3px">Facebook</div>
<div class="cell" style="left:252.3px;top:336.3px">01/01/20<span class="dd">...</span></div>
<div class="cell" style="left:301.1px;top:336.3px">12/25/20<span class="dd">...</span></div>
<div class="cell" style="left:350.0px;top:336.3px">38449</div>
<div class="cell" style="left:398.8px;top:336.3px">41</div>
<div class="hl" style="left:31.5px;top:348.8px;width:378px"></div>
<div class="cell" style="left:31.5px;width:19.2px;text-align:center;top:353.9px;color:#556">3</div>
<div class="cell" style="left:56.9px;top:353.9px">556a882c<span class="dd">...</span></div>
<div class="cell" style="left:105.8px;top:353.9px">481551</div>
<div class="cell" style="left:154.6px;top:353.9px">Marketing</div>
<div class="cell" style="left:203.4px;top:353.9px">eHarmony</div>
<div class="cell" style="left:252.3px;top:353.9px">01/01/20<span class="dd">...</span></div>
<div class="cell" style="left:301.1px;top:353.9px">12/25/20<span class="dd">...</span></div>
<div class="cell" style="left:350.0px;top:353.9px">67438</div>
<div class="cell" style="left:398.8px;top:353.9px">65</div>
<div class="hl" style="left:31.5px;top:366.4px;width:378px"></div>
<div class="cell" style="left:31.5px;width:19.2px;text-align:center;top:371.4px;color:#556">4</div>
<div class="cell" style="left:56.9px;top:371.4px">556a882c<span class="dd">...</span></div>
<div class="cell" style="left:105.8px;top:371.4px">103112</div>
<div class="cell" style="left:154.6px;top:371.4px">Transacti<span class="dd">...</span></div>
<div class="cell" style="left:203.4px;top:371.4px">Macy's</div>
<div class="cell" style="left:252.3px;top:371.4px">01/01/20<span class="dd">...</span></div>
<div class="cell" style="left:301.1px;top:371.4px">12/25/20<span class="dd">...</span></div>
<div class="cell" style="left:350.0px;top:371.4px">15844</div>
<div class="cell" style="left:398.8px;top:371.4px">17</div>
<div class="hl" style="left:31.5px;top:383.9px;width:378px"></div>
<div class="cell" style="left:31.5px;width:19.2px;text-align:center;top:389.0px;color:#556">5</div>
<div class="cell" style="left:56.9px;top:389.0px">556a882c<span class="dd">...</span></div>
<div class="cell" style="left:105.8px;top:389.0px">150167</div>
<div class="cell" style="left:154.6px;top:389.0px">Transacti<span class="dd">...</span></div>
<div class="cell" style="left:203.4px;top:389.0px">Target</div>
<div class="cell" style="left:252.3px;top:389.0px">01/05/20<span class="dd">...</span></div>
<div class="cell" style="left:301.1px;top:389.0px">01/01/20<span class="dd">...</span></div>
<div class="cell" style="left:350.0px;top:389.0px">34796</div>
<div class="cell" style="left:398.8px;top:389.0px">34</div>
<div class="abs" style="left:50.2px;top:314.2px;width:1px;height:87.6px;background:#dbe6f1"></div>
<div class="abs" style="left:33px;top:402px;width:137.4px;height:4.2px;border-radius:2.1px;background:#b7b7b7"></div>
<div class="abs" style="left:410.3px;top:316px;width:2.8px;height:9px;border-radius:1.4px;background:#a4a4a4"></div>
<div class="abs" style="left:31.5px;top:408.2px;width:382.5px;height:16px;background:#e9e9e9"></div>
<div class="abs" style="left:66.5px;top:408.2px;width:42px;height:16px;background:#fff"></div>
<div class="cell" style="left:71.5px;top:412.3px;color:#555">Data</div>
<svg class="abs" style="left:36px;top:409px" width="80" height="15" viewBox="36 409 80 15"><path d="M41.7 414.4v5.2 M39.1 417h5.2" stroke="#444" stroke-width="0.9" fill="none"/>
<circle cx="55.7" cy="414.5" r="0.6" fill="#444"/><circle cx="55.7" cy="417" r="0.6" fill="#444"/><circle cx="55.7" cy="419.5" r="0.6" fill="#444"/>
<path d="M100.9 416.4h2.6l-1.3 1.4z" fill="#777"/></svg>
<svg class="abs" style="left:402px;top:413px" width="12" height="11" viewBox="402 413 12 11"><path d="M404.2 418.2l2.1-2.2 2.1 2.2" stroke="#555" stroke-width="0.8" fill="none"/><path d="M413.5 419.5l-3.5 3.5h3.5z" fill="#c8ccd0"/></svg>
<div class="panel" style="left:417.6px;top:224.9px;width:384px;height:201px;border-color:#b9bbbd;border-radius:3px"></div>
<div class="title" style="left:425px;top:230px">Sending Activity - Recommendations</div>
<div class="num" style="left:430.2px;top:256.5px">1</div>
<div class="rec1" style="left:453px;top:256.7px">Conversions spike in mid-January, likely due to post-holiday activity.</div>
<svg class="abs" style="left:452.5px;top:271.9px" width="7" height="7" viewBox="0 0 7 7"><path d="M1 6L4.4 2.6" stroke="#e34d46" stroke-width="1.5" stroke-linecap="round"/><path d="M5.4 0.4l0.35 0.9 0.9 0.35-0.9 0.35-0.35 0.9-0.35-0.9-0.9-0.35 0.9-0.35z" fill="#e0403a"/></svg>
<div class="rec2" style="left:461px;top:270.5px"><b>Action:</b> Plan targeted campaigns for early January to capitalize on this trend.</div>
<div class="num" style="left:430.2px;top:295.6px">2</div>
<div class="rec1" style="left:453px;top:295.8px">December shows a mix of high and low conversions, with peaks before Christmas.</div>
<svg class="abs" style="left:452.5px;top:311.0px" width="7" height="7" viewBox="0 0 7 7"><path d="M1 6L4.4 2.6" stroke="#e34d46" stroke-width="1.5" stroke-linecap="round"/><path d="M5.4 0.4l0.35 0.9 0.9 0.35-0.9 0.35-0.35 0.9-0.35-0.9-0.9-0.35 0.9-0.35z" fill="#e0403a"/></svg>
<div class="rec2" style="left:461px;top:309.6px"><b>Action:</b> Focus promotions around key holiday dates (e.g., Black Friday, Cyber Monday).</div>
<div class="num" style="left:430.2px;top:334.7px">3</div>
<div class="rec1" style="left:453px;top:334.9px">Conversions drop sharply in mid-February, possibly due to post-holiday fatigue.</div>
<svg class="abs" style="left:452.5px;top:350.1px" width="7" height="7" viewBox="0 0 7 7"><path d="M1 6L4.4 2.6" stroke="#e34d46" stroke-width="1.5" stroke-linecap="round"/><path d="M5.4 0.4l0.35 0.9 0.9 0.35-0.9 0.35-0.35 0.9-0.35-0.9-0.9-0.35 0.9-0.35z" fill="#e0403a"/></svg>
<div class="rec2" style="left:461px;top:348.7px"><b>Action:</b> Reduce spending or shift focus to other months for better ROI.</div>
<div class="num" style="left:430.2px;top:373.8px">4</div>
<div class="rec1" style="left:453px;top:374.0px">The highest conversion week is mid-January (10,228), suggesting strong demand.</div>
<svg class="abs" style="left:452.5px;top:389.2px" width="7" height="7" viewBox="0 0 7 7"><path d="M1 6L4.4 2.6" stroke="#e34d46" stroke-width="1.5" stroke-linecap="round"/><path d="M5.4 0.4l0.35 0.9 0.9 0.35-0.9 0.35-0.35 0.9-0.35-0.9-0.9-0.35 0.9-0.35z" fill="#e0403a"/></svg>
<div class="rec2" style="left:461px;top:387.8px"><b>Action:</b> Allocate more budget to January campaigns based on historical performance.</div>
<div class="num" style="left:430.2px;top:412.9px">5</div>
<div class="rec1" style="left:453px;top:413.1px">Conversions are lower in late February compared to earlier in the month.</div>
<svg class="abs" style="left:790px;top:414px" width="10" height="10" viewBox="0 0 10 10"><path d="M6.6 10.4L10.4 6.6" stroke="#4ab0ee" stroke-width="1.4" fill="none"/></svg>
<svg class="abs" style="left:376.4px;top:222.9px" width="6.6" height="9.9" viewBox="0 0 8 12"><path d="M0.6 0.6V9.4L2.7 7.5 4.2 11 5.6 10.4 4.2 7H7z" fill="#111" stroke="#fff" stroke-width="0.6"/></svg>
</div></body></html>
